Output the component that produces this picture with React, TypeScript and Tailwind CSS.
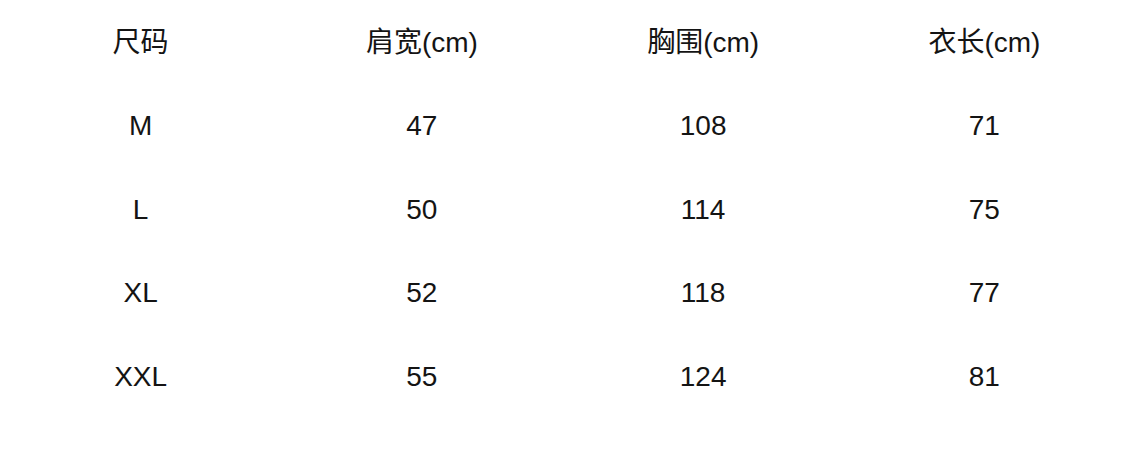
import React from "react";

const headers = ["尺码", "肩宽(cm)", "胸围(cm)", "衣长(cm)"];

const rows = [
  ["M", "47", "108", "71"],
  ["L", "50", "114", "75"],
  ["XL", "52", "118", "77"],
  ["XXL", "55", "124", "81"],
];

const App = () => {
  return (
    <div className="w-[1125px] h-[459px] bg-white pt-[1px] text-[28px] text-[#141414] font-['Liberation_Sans','Noto_Sans_CJK_SC',sans-serif]">
      <div className="grid grid-cols-4 h-[83.5px] items-center">
        {headers.map((h) => (
          <div key={h} className="text-center leading-none">
            {h}
          </div>
        ))}
      </div>
      {rows.map((r) => (
        <div key={r[0]} className="grid grid-cols-4 h-[83.5px] items-center">
          {r.map((cell, i) => (
            <div key={i} className="text-center leading-none">
              {cell}
            </div>
          ))}
        </div>
      ))}
    </div>
  );
};

export default App;
